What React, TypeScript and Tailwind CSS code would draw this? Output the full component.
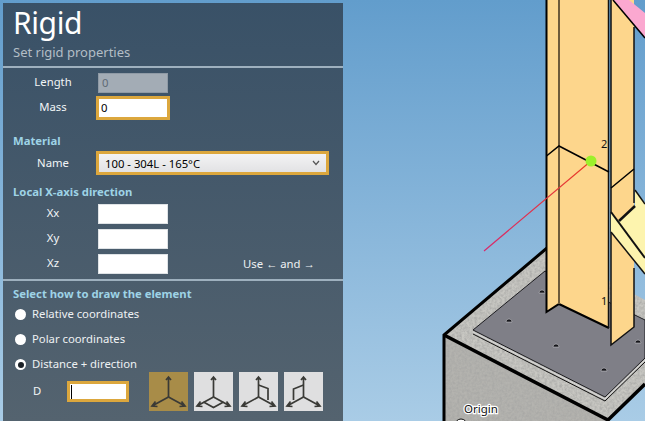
const font = { fontFamily: '"Noto Sans", "Open Sans", sans-serif' };

const Field = ({ label, value, disabled, focused }: { label: string; value?: string; disabled?: boolean; focused?: boolean }) => (
  <div className="flex items-center h-6">
    <span className="w-[95px] pl-[5px] pb-[2px] text-center text-[11.3px] text-[#f2f5f7]">{label}</span>
    <div
      className={
        disabled
          ? "w-[70px] h-5 bg-[#a3acb5] border border-[#8f9aa5] pl-[3px] text-[11.3px] leading-[18px] text-[#5f6b76]"
          : focused
            ? "w-[74px] h-[24px] -ml-0.5 bg-white border-[3px] border-[#dca73d] pl-0.5 text-[11.3px] leading-[18px] text-black"
            : "w-[70px] h-5 bg-white border border-[#dfe3e6]"
      }
    >
      {value}
    </div>
  </div>
);

const Radio = ({ label, checked }: { label: string; checked?: boolean }) => (
  <div className="flex items-center h-[25px]">
    <span className="flex items-center justify-center w-[11px] h-[11px] ml-[2px] mr-[6px] rounded-full bg-white">
      {checked && <span className="w-[6px] h-[6px] rounded-full bg-[#1b2127]" />}
    </span>
    <span className="text-[11.3px] text-[#eef1f3]">{label}</span>
  </div>
);

const AxisButton = ({ active, children }: { active?: boolean; children?: React.ReactNode }) => (
  <div className={active ? "w-[39px] h-[39px] bg-[#a88c48]" : "w-[39px] h-[39px] bg-[#dfdfe0]"}>
    <svg width="39" height="39" viewBox="0 0 39 39" fill="none" stroke="#3a3a36" strokeWidth="1.7">
      <path d="M19.500 25V5M17 8l2.500-3 2.500 3" />
      <path d="M19.500 25L3 34M6.500 29.500L3 34l5.500 .5" />
      <path d="M19.500 25L36 34M32.500 29.500L36 34l-5.500 .5" />
      {children}
    </svg>
  </div>
);

const Bolt = ({ x, y }: { x: number; y: number }) => (
  <path d={`M${x - 3} ${y + 2}a3 3 0 0 1 6 0z`} fill="#15151a" stroke="#d4d4d8" strokeWidth="0.5" />
);

const Scene = () => (
  <svg width="302" height="421" viewBox="343 0 302 421" className="block shrink-0">
    <defs>
      <filter id="grain" x="0" y="0" width="100%" height="100%">
        <feTurbulence type="fractalNoise" baseFrequency="0.4" numOctaves="3" seed="4" />
        <feColorMatrix values="0 0 0 0 0.38  0 0 0 0 0.38  0 0 0 0 0.37  1.5 0 0 0 -0.45" />
        <feComposite in2="SourceGraphic" operator="in" />
        <feMerge>
          <feMergeNode in="SourceGraphic" />
          <feMergeNode />
        </feMerge>
      </filter>
      <linearGradient id="ray" x1="591" y1="161" x2="484" y2="251" gradientUnits="userSpaceOnUse">
        <stop offset="0" stopColor="#ea3d22" />
        <stop offset="1" stopColor="#d62a6e" />
      </linearGradient>
    </defs>

    {/* concrete block */}
    <polygon points="443,336 547,248 645,300 645,385 607,421 443,421" fill="#c8c7c2" filter="url(#grain)" />
    <polygon points="445,337 607,421 445,421" fill="#b4b3af" filter="url(#grain)" />
    <path d="M444 421V335L547 248" fill="none" stroke="#000" strokeWidth="3" />
    <path d="M444 335L608 420L645 384" fill="none" stroke="#000" strokeWidth="3.500" />

    {/* base plate */}
    <polygon points="473,330 545,271 645,320 645,358 605,397" fill="#7f7f87" stroke="#1c1c20" strokeWidth="1" />
    <path d="M473 332L605 399L645 360" fill="none" stroke="#d9d9d9" strokeWidth="1" />
    <path d="M473 334L605 401L645 362" fill="none" stroke="#111" strokeWidth="1" />
    <Bolt x={509} y={320} />
    <Bolt x={542} y={291} />
    <Bolt x={556} y={345} />
    <Bolt x={604} y={369} />
    <Bolt x={638} y={341} />

    {/* column */}
    <polygon points="547,0 609,0 609,328 559,304 547,312" fill="#fdd68c" />
    <polygon points="611,0 634,0 634,327 611,345" fill="#fdd68c" />
    <path d="M546.500 0V312L559 304L609 328" fill="none" stroke="#000" strokeWidth="2" />
    <path d="M559 0V304" stroke="#6d5a3a" strokeWidth="2" />
    <path d="M608.500 0V328M611 0V345L634 327V268M634 203V27" fill="none" stroke="#111" strokeWidth="1.500" />
    <path d="M546.500 156L559 146L609 172M611 188L634 169" fill="none" stroke="#000" strokeWidth="1.500" />

    {/* brace */}
    <polygon points="611,213 619,221 635,206 635,190 645,203 645,274 611,232" fill="#fdf4ae" />
    <path d="M611 212L645 258" fill="none" stroke="#111" strokeWidth="2" />
    <path d="M611 232L645 274" fill="none" stroke="#111" strokeWidth="1.500" />
    <path d="M619 221L635 206" fill="none" stroke="#111" strokeWidth="2.500" />
    <path d="M635 190L645 204" fill="none" stroke="#111" strokeWidth="1.500" />

    {/* pink beam */}
    <polygon points="613,0 629,0 645,13 645,38" fill="#fba8d0" />
    <path d="M613 0L645 38" fill="none" stroke="#000" strokeWidth="1.500" />

    {/* local axis */}
    <path d="M591 161L484 251" stroke="url(#ray)" strokeWidth="1.200" />
    <circle cx="591" cy="161" r="5.500" fill="#9cf02b" />

    <text x="601" y="148" fontSize="11" fill="#111" fontFamily="Noto Sans">2</text>
    <text x="601" y="305" fontSize="11" fill="#111" fontFamily="Noto Sans">1</text>
    <text x="464" y="413" fontSize="11.5" fill="#111" stroke="#fff" strokeWidth="2.500" paintOrder="stroke" fontFamily="Noto Sans">Origin</text>
    <circle cx="461" cy="425" r="6" fill="#fff" stroke="#111" />
  </svg>
);

export default function App() {
  return (
    <div style={font} className="flex w-[645px] h-[421px] overflow-hidden pl-[3px] bg-gradient-to-b from-[#629dcc] to-[#a9cce6]">
      <div className="w-[340px] h-[418px] mt-[3px] shrink-0 flex flex-col bg-gradient-to-b from-[#395167] to-[#54636f]">
        {/* header */}
        <div className="h-[63px] pl-[10px] border-b-2 border-[#9eb0be] box-content">
          <h1 className="text-[30px] tracking-[-0.4px] leading-[38px] pt-[1px] h-[40px] text-white">Rigid</h1>
          <p className="text-[13px] leading-[18px] text-[#b3bec6]">Set rigid properties</p>
        </div>

        {/* properties */}
        <div className="h-[208px] flex flex-col pt-[3px] border-b-2 border-[#9eb0be] box-content">
          <Field label="Length" value="0" disabled />
          <div className="mt-[1px]"><Field label="Mass" value="0" focused /></div>

          <h2 className="mt-[13px] pl-[10px] text-[11.3px] leading-4 font-bold text-[#9ed3e6]">Material</h2>
          <div className="flex items-center h-[24px] mt-[2px]">
            <span className="w-[95px] pl-[5px] text-center text-[11.3px] text-[#f2f5f7]">Name</span>
            <div className="flex items-center justify-between w-[233px] h-[24px] -ml-0.5 pl-[6px] pr-[6px] border-[3px] border-[#dca73d] bg-gradient-to-b from-[#f3f3f4] to-[#e2e2e4] text-[11.3px] text-black">
              <span className="pt-[3px]">100 - 304L - 165°C</span>
              <svg width="8" height="6" viewBox="0 0 8 6" fill="none" stroke="#555" strokeWidth="1.200"><path d="M1 1l3 3.500L7 1" /></svg>
            </div>
          </div>

          <h2 className="mt-[9px] pl-[10px] text-[11.3px] leading-4 font-bold text-[#9ed3e6]">Local X-axis direction</h2>
          <div className="mt-[2px] flex flex-col gap-[1px]">
            <Field label="Xx" />
            <Field label="Xy" />
            <div className="flex items-center">
              <div className="w-[240px]"><Field label="Xz" /></div>
              <span className="text-[11.3px] text-[#eef1f3]">
                Use <span className="font-['Liberation_Sans']">←</span> and <span className="font-['Liberation_Sans']">→</span>
              </span>
            </div>
          </div>
        </div>

        {/* drawing mode */}
        <div className="flex-1 pl-[10px] pt-[5px]">
          <h2 className="text-[11.3px] leading-4 font-bold text-[#9ed3e6]">Select how to draw the element</h2>
          <Radio label="Relative coordinates" />
          <Radio label="Polar coordinates" />
          <Radio label="Distance + direction" checked />
          <div className="flex items-center -mt-[5px]">
            <span className="w-[54px] pl-[20px] text-[11.3px] text-[#f2f5f7]">D</span>
            <div className="w-[62px] h-[21px] border-[3px] border-[#dca73d] bg-white flex items-center pl-[1px]">
              <span className="w-px h-[14px] bg-black" />
            </div>
            <div className="flex gap-[6px] ml-[20px]">
              <AxisButton active />
              <AxisButton><path d="M9.500 30L19.500 35.500L29.500 30" /></AxisButton>
              <AxisButton><path d="M19.500 13L29 16.500V28" /></AxisButton>
              <AxisButton><path d="M19.500 13L9.500 17V28" /></AxisButton>
            </div>
          </div>
        </div>
      </div>
      <Scene />
    </div>
  );
}
